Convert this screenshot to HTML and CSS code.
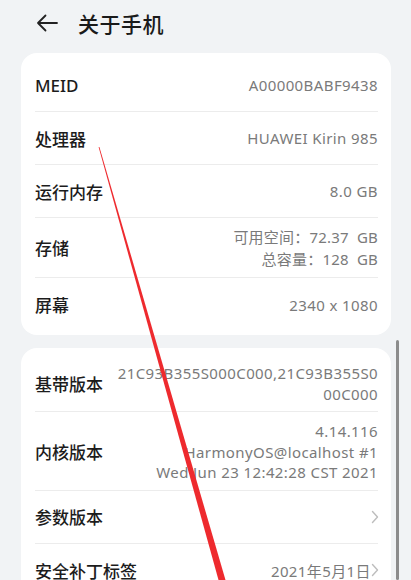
FILE: index.html
```html
<!DOCTYPE html>
<html>
<head>
<meta charset="utf-8">
<link rel="stylesheet" href="styles.css">
</head>
<body>
<div class="page">
  <header class="topbar">
    <svg class="back" width="22" height="18" viewBox="0 0 22 18"><path d="M21 9H2M9.5 1.5L2 9l7.5 7.5" fill="none" stroke="#222" stroke-width="1.8" stroke-linecap="round" stroke-linejoin="round"/></svg>
    <h1 class="title">关于手机</h1>
  </header>
  <section class="card card-one">
    <div class="row"><span class="label">MEID</span><span class="value">A00000BABF9438</span></div>
    <div class="row"><span class="label">处理器</span><span class="value">HUAWEI Kirin 985</span></div>
    <div class="row"><span class="label">运行内存</span><span class="value">8.0 GB</span></div>
    <div class="row row-tall"><span class="label">存储</span><span class="value multi">可用空间：72.37&nbsp; GB<br>总容量：128&nbsp; GB</span></div>
    <div class="row"><span class="label">屏幕</span><span class="value">2340 x 1080</span></div>
  </section>
  <section class="card card-two">
    <div class="row row-multi"><span class="label">基带版本</span><span class="value multi wrap">21C93B355S000C000,21C93B355S000C000</span></div>
    <div class="row row-multi"><span class="label">内核版本</span><span class="value multi">4.14.116<br>HarmonyOS@localhost #1<br>Wed Jun 23 12:42:28 CST 2021</span></div>
    <div class="row"><span class="label">参数版本</span><span class="value"><svg class="chev" width="8" height="14" viewBox="0 0 8 14"><path d="M1.5 1.5L6.5 7l-5 5.5" fill="none" stroke="#bdbdbd" stroke-width="1.4" stroke-linecap="round" stroke-linejoin="round"/></svg></span></div>
    <div class="row"><span class="label">安全补丁标签</span><span class="value">2021年5月1日<svg class="chev" width="8" height="14" viewBox="0 0 8 14"><path d="M1.5 1.5L6.5 7l-5 5.5" fill="none" stroke="#bdbdbd" stroke-width="1.4" stroke-linecap="round" stroke-linejoin="round"/></svg></span></div>
  </section>
  <div class="scrollbar"></div>
  <svg class="annot" width="411" height="580" viewBox="0 0 411 580"><polygon points="98.6,147 99.4,147 225.5,580 218.5,580" fill="#ee2a2e"/></svg>
</div>
</body>
</html>
```
FILE: styles.css
```css
* { box-sizing: border-box; margin: 0; padding: 0; }
html, body { width: 411px; height: 580px; overflow: hidden; }
body { background: #f1f3f5; font-family: "Noto Sans", "Noto Sans CJK SC", sans-serif; color: #1c1c1c; }
.page { position: relative; width: 411px; height: 580px; padding: 0 20px 0 21px; }
.topbar { height: 53px; display: flex; align-items: center; padding-left: 15px; padding-bottom: 8px; }
.back { margin-right: 20px; }
.title { font-size: 21px; font-weight: 500; color: #1a1a1a; letter-spacing: 0.5px; }
.card { background: #fff; border-radius: 16px; padding: 6px 13px 4px 14px; }
.card-two { margin-top: 13px; padding-top: 6px; }
.row { display: flex; justify-content: space-between; align-items: center; min-height: 53px; border-bottom: 1px solid #ececec; }
.row:last-child { border-bottom: none; }
.row-tall { min-height: 60px; }
.row-multi { padding: 9px 0 7px; }
.label { font-size: 17px; font-weight: 500; color: #1c1c1c; white-space: nowrap; }
.value { font-size: 15px; letter-spacing: 0.4px; color: #7a7a7a; text-align: right; display: flex; align-items: center; }
.multi { display: block; line-height: 20.5px; }
.row-tall .multi { line-height: 22px; letter-spacing: 0.2px; }
.wrap { width: 263px; word-break: break-all; }
.chev { margin-left: 9px; margin-right: -1px; }
.value .chev:only-child { margin-left: 0; }
.scrollbar { position: absolute; left: 396px; top: 340px; width: 3px; height: 240px; background: #8c8c8c; border-radius: 2px; }
.annot { position: absolute; left: 0; top: 0; pointer-events: none; }
```
